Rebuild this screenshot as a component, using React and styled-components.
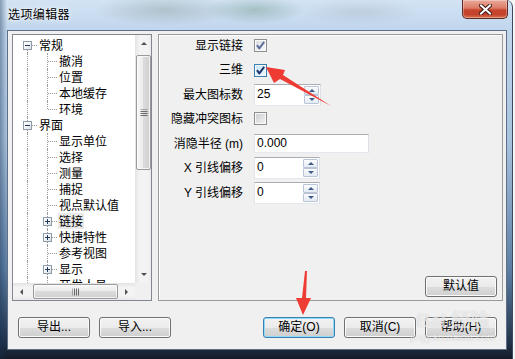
import React from 'react'
import styled, { createGlobalStyle } from 'styled-components'

const GlobalStyle = createGlobalStyle`
  html, body {
    margin: 0;
    padding: 0;
    background: #f4f6f8;
  }
  body {
    font-family: 'Liberation Sans', 'Noto Sans CJK SC', sans-serif;
    font-size: 12px;
    color: #000;
  }
  * {
    box-sizing: border-box;
  }
`

const tree = [
  {
    label: '常规',
    children: [{ label: '撤消' }, { label: '位置' }, { label: '本地缓存' }, { label: '环境' }],
  },
  {
    label: '界面',
    more: true,
    children: [
      { label: '显示单位' },
      { label: '选择' },
      { label: '测量' },
      { label: '捕捉' },
      { label: '视点默认值' },
      { label: '链接', plus: true, selected: true },
      { label: '快捷特性', plus: true },
      { label: '参考视图' },
      { label: '显示', plus: true },
      { label: '开发人员' },
    ],
  },
]

const fields = [
  { label: '显示链接', kind: 'check', checked: true, dim: true, h: 21 },
  { label: '三维', kind: 'check', checked: true, focus: true, h: 28 },
  { label: '最大图标数', kind: 'spin', value: '25', w: 67, h: 22 },
  { label: '隐藏冲突图标', kind: 'check', h: 25 },
  { label: '消隐半径 (m)', kind: 'text', value: '0.000', w: 115, h: 25 },
  { label: 'X 引线偏移', kind: 'spin', value: '0', w: 66, h: 24 },
  { label: 'Y 引线偏移', kind: 'spin', value: '0', w: 66, h: 26 },
]

const flattenTree = () => {
  const rows = []
  tree.forEach((node, i) => {
    rows.push({ key: node.label, depth: 0, label: node.label, up: i > 0, down: true })
    node.children.forEach((child, j) => {
      const last = j === node.children.length - 1 && !node.more
      rows.push({ key: node.label + child.label, depth: 1, last, ...child })
    })
  })
  return rows
}

const Arrow = ({ dir, color = '#505050', size = 3 }) => <ArrowGlyph $dir={dir} $color={color} $size={size} />

const CheckBox = ({ checked, focus, dim }) => (
  <Check $focus={focus} $dim={dim}>
    {checked && (
      <svg width="11" height="11" viewBox="0 0 11 11">
        <path
          d="M2 5.2 L4.3 8.4 L9.2 1.8"
          fill="none"
          stroke={dim ? '#5d6f9c' : '#1d3670'}
          strokeWidth="2"
          strokeLinejoin="round"
        />
      </svg>
    )}
  </Check>
)

const SpinBox = ({ value, w }) => (
  <Box $w={w} $h={22}>
    <BoxValue $lh={18}>{value}</BoxValue>
    <SpinButtons>
      <SpinHalf>
        <Arrow dir="up" color="#3f5a86" size={3} />
      </SpinHalf>
      <SpinHalf>
        <Arrow dir="down" color="#3f5a86" size={3} />
      </SpinHalf>
    </SpinButtons>
  </Box>
)

const TreePane = () => (
  <TreeBox>
    <TreeView>
      {flattenTree().map((row) => (
        <TreeRow key={row.key}>
          <Indent $up={row.depth === 1 || row.up} $down={row.depth === 1 || row.down} $stub={row.depth === 0}>
            {row.depth === 0 && <Expander />}
          </Indent>
          {row.depth === 1 && (
            <Indent $up $down={!row.last} $stub>
              {row.plus && <Expander $plus />}
            </Indent>
          )}
          <NodeLabel $selected={row.selected}>{row.label}</NodeLabel>
        </TreeRow>
      ))}
    </TreeView>
    <VScroll>
      <ScrollArrowBox>
        <Arrow dir="up" />
      </ScrollArrowBox>
      <Thumb $vertical />
      <Spacer />
      <ScrollArrowBox>
        <Arrow dir="down" />
      </ScrollArrowBox>
    </VScroll>
    <HScroll>
      <ScrollArrowBox>
        <Arrow dir="left" />
      </ScrollArrowBox>
      <Thumb />
      <Spacer />
      <ScrollArrowBox>
        <Arrow dir="right" />
      </ScrollArrowBox>
    </HScroll>
    <Corner />
  </TreeBox>
)

const OptionsPane = () => (
  <Panel>
    <Form>
      {fields.map((f) => (
        <Field key={f.label} $h={f.h}>
          <FieldLabel>{f.label}</FieldLabel>
          {f.kind === 'check' && <CheckBox checked={f.checked} focus={f.focus} dim={f.dim} />}
          {f.kind === 'spin' && <SpinBox value={f.value} w={f.w} />}
          {f.kind === 'text' && (
            <Box $w={f.w} $h={19}>
              <BoxValue $lh={17}>{f.value}</BoxValue>
            </Box>
          )}
        </Field>
      ))}
    </Form>
    <PanelFooter>
      <Button>默认值</Button>
    </PanelFooter>
  </Panel>
)

const App = () => {
  return (
    <>
      <GlobalStyle />
      <Window>
        <TitleBar>
          <Title>选项编辑器</Title>
          <CloseBtn>
            <svg width="13" height="11" viewBox="0 0 13 11">
              <path d="M2 1.5 L11 9.5 M11 1.5 L2 9.5" stroke="#3d1a14" strokeWidth="4" strokeLinecap="square" />
              <path d="M2 1.5 L11 9.5 M11 1.5 L2 9.5" stroke="#ffffff" strokeWidth="2" strokeLinecap="square" />
            </svg>
          </CloseBtn>
        </TitleBar>
        <Client>
          <Main>
            <TreePane />
            <OptionsPane />
          </Main>
          <ButtonRow>
            <ButtonGroup>
              <Button>导出...</Button>
              <Button>导入...</Button>
            </ButtonGroup>
            <ButtonGroup>
              <Button $primary>确定(O)</Button>
              <Button>取消(C)</Button>
              <Button>帮助(H)</Button>
            </ButtonGroup>
          </ButtonRow>
        </Client>
        <Watermark>
          <WatermarkBrand>Bai 经验</WatermarkBrand>
          <WatermarkUrl>jingyan.baidu.com</WatermarkUrl>
        </Watermark>
        <Annotations width="515" height="359" viewBox="0 0 515 359">
          <polygon points="266,67 285,70 283,75 331,106 280,79 274,83" fill="#ee3b33" />
          <polygon points="305,271 307,271 306,298 311,298 303,315 296,298 302,298" fill="#ee3b33" />
        </Annotations>
      </Window>
    </>
  )
}

export default App

const Window = styled.div`
  position: relative;
  width: 513px;
  height: 359px;
  padding: 0 5px 9px 7px;
  display: flex;
  flex-direction: column;
  overflow: hidden;
  border-right: 1px solid #3a4b5e;
  border-top-right-radius: 7px;
  background:
    radial-gradient(70px 16px at 165px 10px, rgba(110, 130, 120, 0.3), transparent),
    radial-gradient(50px 14px at 255px 10px, rgba(70, 120, 90, 0.3), transparent),
    radial-gradient(60px 14px at 360px 12px, rgba(150, 160, 170, 0.25), transparent),
    linear-gradient(90deg, rgba(20, 45, 80, 0.4), transparent 7px),
    linear-gradient(180deg, #d3e3f4 0px, #c0d6ed 30px, #a9c3de 140px, #5d7ea3 270px, #24364d 340px, #141c28 359px);
`

const TitleBar = styled.div`
  height: 30px;
  flex: none;
  display: flex;
  justify-content: space-between;
  align-items: flex-start;
`

const Title = styled.div`
  margin: 6px 0 0 1px;
  font-family: 'Noto Sans CJK SC', sans-serif;
  font-size: 12px;
  line-height: 16px;
  letter-spacing: 0.4px;
  text-shadow: 0 0 6px rgba(255, 255, 255, 0.95), 0 0 3px rgba(255, 255, 255, 0.9);
`

const CloseBtn = styled.div`
  width: 46px;
  height: 19px;
  margin-right: -1px;
  border: 1px solid #5f2a22;
  border-top: none;
  border-radius: 0 0 5px 5px;
  background: linear-gradient(180deg, #e9a99b 0%, #dc7b66 45%, #c8452c 55%, #c4412b 80%, #d87552 100%);
  box-shadow: inset 0 0 0 1px rgba(255, 255, 255, 0.3);
  display: flex;
  align-items: center;
  justify-content: center;
`

const Client = styled.div`
  flex: 1;
  background: #f0f0f0;
  border: 1px solid #5d7088;
  padding: 3px 3px 0 4px;
  display: flex;
  flex-direction: column;
`

const Main = styled.div`
  height: 267px;
  flex: none;
  display: flex;
  gap: 6px;
`

const TreeBox = styled.div`
  width: 140px;
  flex: none;
  border: 1px solid #828790;
  background: #fff;
  display: grid;
  grid-template-columns: 1fr 17px;
  grid-template-rows: 1fr 17px;
  overflow: hidden;
`

const TreeView = styled.div`
  grid-row: 1;
  grid-column: 1;
  padding: 2px 0 0 4px;
  overflow: hidden;
  font-family: 'Noto Sans CJK SC', sans-serif;
  font-size: 12px;
`

const TreeRow = styled.div`
  display: flex;
  align-items: center;
  height: 16px;
`

const Indent = styled.span`
  position: relative;
  flex: none;
  width: 20px;
  height: 16px;
  padding-left: 6px;
  display: flex;
  align-items: center;

  &::before {
    content: '';
    display: ${(p) => (p.$up || p.$down ? 'block' : 'none')};
    position: absolute;
    left: 10px;
    top: ${(p) => (p.$up ? 0 : 8)}px;
    bottom: ${(p) => (p.$down ? 0 : 8)}px;
    border-left: 1px dotted #9a9a9a;
  }

  &::after {
    content: '';
    display: ${(p) => (p.$stub ? 'block' : 'none')};
    position: absolute;
    left: 11px;
    right: 0;
    top: 8px;
    border-top: 1px dotted #9a9a9a;
  }
`

const Expander = styled.span`
  position: relative;
  z-index: 1;
  width: 9px;
  height: 9px;
  border: 1px solid #8e9bab;
  background: linear-gradient(135deg, #ffffff 0%, #f2f2f2 55%, #d9dde2 100%);

  &::before {
    content: '';
    position: absolute;
    left: 1px;
    right: 1px;
    top: 3px;
    height: 1px;
    background: #1e395b;
  }

  &::after {
    content: '';
    display: ${(p) => (p.$plus ? 'block' : 'none')};
    position: absolute;
    top: 1px;
    bottom: 1px;
    left: 3px;
    width: 1px;
    background: #1e395b;
  }
`

const NodeLabel = styled.span`
  margin-left: 1px;
  padding: 0 1px;
  height: 16px;
  line-height: 16px;
  white-space: nowrap;
  background: ${(p) => (p.$selected ? '#e9e9e9' : 'transparent')};
`

const VScroll = styled.div`
  grid-row: 1;
  grid-column: 2;
  display: flex;
  flex-direction: column;
  align-items: center;
  background: linear-gradient(90deg, #e3e3e3, #f3f3f3 25%, #f3f3f3 75%, #e8e8e8);
`

const HScroll = styled.div`
  grid-row: 2;
  grid-column: 1;
  display: flex;
  align-items: center;
  background: linear-gradient(180deg, #e3e3e3, #f3f3f3 25%, #f3f3f3 75%, #e8e8e8);
`

const Corner = styled.div`
  grid-row: 2;
  grid-column: 2;
  background: #f0f0f0;
`

const ScrollArrowBox = styled.div`
  width: 17px;
  height: 17px;
  flex: none;
  display: flex;
  align-items: center;
  justify-content: center;
`

const Spacer = styled.div`
  flex: 1;
`

const Thumb = styled.div`
  position: relative;
  flex: none;
  width: ${(p) => (p.$vertical ? '15px' : '85px')};
  height: ${(p) => (p.$vertical ? '115px' : '15px')};
  ${(p) => (p.$vertical ? 'margin-top: 3px;' : 'margin-left: 3px;')}
  border: 1px solid #9a9a9a;
  border-radius: 2px;
  background: linear-gradient(
    ${(p) => (p.$vertical ? '90deg' : '180deg')},
    #f6f6f6 0%,
    #ececec 45%,
    #dcdcdc 50%,
    #cfcfcf 100%
  );
  box-shadow: inset 0 0 0 1px rgba(255, 255, 255, 0.7);

  &::after {
    content: '';
    position: absolute;
    left: 50%;
    top: 50%;
    width: 7px;
    height: 7px;
    transform: translate(-50%, -50%);
    background: repeating-linear-gradient(
      ${(p) => (p.$vertical ? '180deg' : '90deg')},
      #6b6b6b 0px,
      #6b6b6b 1px,
      transparent 1px,
      transparent 2px
    );
  }
`

const ArrowGlyph = styled.span`
  width: 0;
  height: 0;
  border-style: solid;
  border-color: transparent;
  border-width: ${(p) => {
    const s = p.$size
    if (p.$dir === 'up') return `0 ${s}px ${s}px ${s}px`
    if (p.$dir === 'down') return `${s}px ${s}px 0 ${s}px`
    if (p.$dir === 'left') return `${s}px ${s}px ${s}px 0`
    return `${s}px 0 ${s}px ${s}px`
  }};
  ${(p) => {
    const side = { up: 'bottom', down: 'top', left: 'right', right: 'left' }[p.$dir]
    return `border-${side}-color: ${p.$color};`
  }}
`

const Panel = styled.div`
  flex: 1;
  display: flex;
  flex-direction: column;
  border: 1px solid #9a9a9a;
  box-shadow: inset 1px 1px 0 #ffffff;
`

const Form = styled.div`
  display: flex;
  flex-direction: column;
`

const Field = styled.div`
  display: flex;
  align-items: center;
  gap: 11px;
  height: ${(p) => p.$h}px;
`

const FieldLabel = styled.span`
  width: 84px;
  flex: none;
  text-align: right;
  white-space: nowrap;
  line-height: 16px;
`

const Check = styled.span`
  width: 13px;
  height: 13px;
  flex: none;
  border: 1px solid ${(p) => (p.$focus ? '#3c7fb1' : '#8e8f8f')};
  background: ${(p) =>
    p.$focus
      ? 'linear-gradient(135deg, #c4e5f8, #f0f9fe)'
      : p.$dim
      ? 'linear-gradient(135deg, #d9dce0, #fafafa)'
      : 'linear-gradient(135deg, #c9cdd3, #f4f4f4)'};
  box-shadow: inset 0 0 0 1px #f8f8f8;
  display: flex;
  align-items: center;
  justify-content: center;
`

const Box = styled.div`
  width: ${(p) => p.$w}px;
  height: ${(p) => p.$h}px;
  flex: none;
  display: flex;
  background: #fff;
  border: 1px solid;
  border-color: #abadb3 #dbdfe6 #e3e9ef #e2e3ea;
`

const BoxValue = styled.span`
  flex: 1;
  padding-left: 2px;
  line-height: ${(p) => p.$lh}px;
  font-size: 12px;
`

const SpinButtons = styled.div`
  width: 16px;
  flex: none;
  padding: 1px 1px 1px 0;
  display: flex;
  flex-direction: column;
`

const SpinHalf = styled.div`
  flex: 1;
  display: flex;
  align-items: center;
  justify-content: center;
  border: 1px solid #b9c5d6;
  border-radius: 1px;
  background: linear-gradient(180deg, #fbfcfe, #e3eaf3);
`

const PanelFooter = styled.div`
  margin-top: auto;
  display: flex;
  justify-content: flex-end;
  padding: 0 5px 3px 0;
`

const ButtonRow = styled.div`
  margin-top: 16px;
  padding: 0 6px;
  display: flex;
  justify-content: space-between;
`

const ButtonGroup = styled.div`
  display: flex;
  gap: 9px;
`

const Button = styled.button`
  width: 72px;
  height: 21px;
  padding: 0;
  font-family: 'Liberation Sans', 'Noto Sans CJK SC', sans-serif;
  font-size: 12px;
  line-height: 19px;
  color: #000;
  border: 1px solid ${(p) => (p.$primary ? '#3c7fb1' : '#707070')};
  border-radius: 3px;
  background: linear-gradient(180deg, #f2f2f2 0%, #ebebeb 50%, #dddddd 51%, #cfcfcf 100%);
  box-shadow: inset 0 0 0 1px ${(p) => (p.$primary ? '#8fdaf8' : '#fbfbfb')};
`

const Watermark = styled.div`
  position: absolute;
  left: 410px;
  top: 309px;
  pointer-events: none;
  color: rgba(255, 255, 255, 0.6);
  text-shadow: 0 0 1px rgba(120, 120, 120, 0.35);
  text-align: center;
`

const WatermarkBrand = styled.div`
  font-family: 'Liberation Sans', 'Noto Sans CJK SC', sans-serif;
  font-weight: bold;
  font-size: 19px;
  line-height: 23px;
`

const WatermarkUrl = styled.div`
  font-family: 'Liberation Sans', sans-serif;
  font-size: 10px;
  line-height: 12px;
  letter-spacing: 0.3px;
`

const Annotations = styled.svg`
  position: absolute;
  left: 0;
  top: 0;
  pointer-events: none;
`
